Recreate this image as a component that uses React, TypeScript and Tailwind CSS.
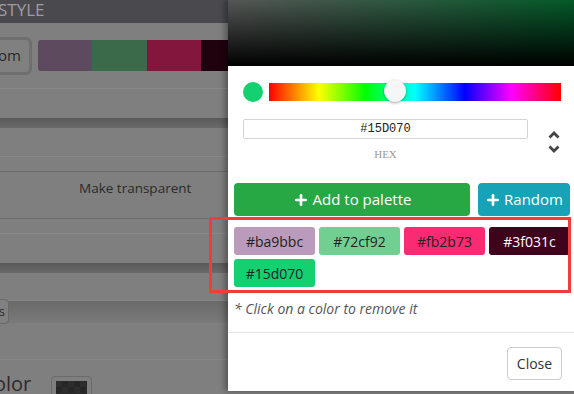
import { Plus } from 'lucide-react';

const palette = [
  { hex: '#ba9bbc', text: 'text-[#222]' },
  { hex: '#72cf92', text: 'text-[#222]' },
  { hex: '#fb2b73', text: 'text-[#222]' },
  { hex: '#3f031c', text: 'text-white' },
  { hex: '#15d070', text: 'text-[#222]' },
];

function Chevron({ up }: { up?: boolean }) {
  return (
    <svg width="12" height="8" viewBox="0 0 12 8" className="block">
      <path
        d={up ? 'M1.5 6.5 L6 2 L10.5 6.5' : 'M1.5 1.5 L6 6 L10.5 1.5'}
        fill="none"
        stroke="#444"
        strokeWidth="2.8"
      />
    </svg>
  );
}

export default function App() {
  return (
    <div className="relative w-[574px] h-[394px] overflow-hidden bg-[#7f7f7f] font-['Open_Sans','Noto_Sans',sans-serif]">
      {/* Page behind the dialog (dimmed) */}
      <div className="flex flex-col">
        <div className="h-[23px] bg-[#4a494e] text-[#9d9ca2] text-[17px] leading-[20px] -ml-[2px]">STYLE</div>
        <div className="h-[66px] border-b border-[#898989] flex items-center gap-[6px] -ml-[20px]">
          <div className="w-[52px] h-[38px] rounded-[6px] border-[3px] border-[#6f6f6f] bg-[#808080] flex items-center justify-end pr-[8px] text-[15px] text-[#2a2a2a]">
            om
          </div>
          <div className="flex h-[31px] rounded-[3px] overflow-hidden">
            <div className="w-[54px] bg-[#5d4a5e]" />
            <div className="w-[55px] bg-[#3a6a4a]" />
            <div className="w-[54px] bg-[#82163c]" />
            <div className="w-[30px] bg-[#20010e]" />
          </div>
        </div>
        <div className="h-[29px]" />
        <div className="h-[10px] bg-gradient-to-b from-[#595959] to-[#6a6a6a]" />
        <div className="h-[29px] border-b border-[#888]" />
        <div className="h-[15px] border-b border-[#6c6c6c]" />
        <div className="h-[32px] flex items-center pl-[79px] text-[13.5px] text-[#2b2b2b]">Make transparent</div>
        <div className="h-[15px] border-b border-[#6c6c6c]" />
        <div className="h-[15px] border-b border-[#888]" />
        <div className="h-[29px]" />
        <div className="h-[10px] bg-gradient-to-b from-[#595959] to-[#6a6a6a]" />
        <div className="h-[28px] border-b border-[#888]" />
        <div className="relative h-[22px] bg-gradient-to-b from-[#6a6a6a] to-[#7a7a7a]">
          <div className="absolute left-[-20px] top-[-2px] w-[29px] h-[25px] rounded-[4px] border border-[#6a6a6a] bg-[#808080] flex items-center justify-end pr-[3px] text-[13px] text-[#2a2a2a]">s</div>
        </div>
        <div className="h-[37px] border-b border-[#888]" />
        <div className="h-[38px] flex items-end gap-[20px] -ml-[6px]">
          <span className="text-[20px] leading-[28px] text-[#2b2b2b]">olor</span>
          <div className="w-[41px] h-[28px] rounded-[4px] border border-[#6a6a6a] p-[4px] mb-[-6px]">
            <div className="w-full h-full bg-[#2d2d2d] bg-[linear-gradient(45deg,#262626_25%,transparent_25%,transparent_75%,#262626_75%),linear-gradient(45deg,#262626_25%,transparent_25%,transparent_75%,#262626_75%)] bg-[length:12px_12px] bg-[position:0_0,6px_6px]" />
          </div>
        </div>
      </div>

      {/* Dialog */}
      <div className="absolute left-[228px] top-0 w-[350px] h-[391px] bg-white shadow-[-3px_0_6px_rgba(0,0,0,0.35)] flex flex-col">
        <div className="h-[66px] bg-[linear-gradient(to_bottom,transparent,#000),linear-gradient(to_right,#565656,#035a28)]" />

        <div className="flex items-center pl-[15px] pr-[13px] pt-[16px] gap-[6px]">
          <div className="w-[20px] h-[20px] rounded-full bg-[#15d070]" />
          <div className="relative w-[292px] h-[18px] bg-[linear-gradient(to_right,#f00_0%,#ff0_17%,#0f0_33%,#0ff_50%,#00f_67%,#f0f_83%,#f00_100%)]">
            <div className="absolute left-[115px] top-[-3px] w-[22px] h-[22px] rounded-full bg-[#f6f6f6] shadow-[0_1px_3px_rgba(0,0,0,0.35)]" />
          </div>
        </div>

        <div className="flex pl-[15px] pt-[17px] gap-[20px]">
          <div className="flex flex-col items-center w-[285px]">
            <div className="w-full h-[20px] border border-[#d4d4d4] rounded-[2px] flex items-center justify-center font-['Liberation_Mono',monospace] text-[12px] text-[#222]">
              #15D070
            </div>
            <div className="mt-[8px] font-['Liberation_Serif',serif] text-[11px] leading-[14px] text-[#999]">HEX</div>
          </div>
          <div className="flex flex-col gap-[6px] pt-[12px]">
            <Chevron up />
            <Chevron />
          </div>
        </div>

        <div className="flex pl-[6px] pt-[22px] gap-[8px]">
          <button className="w-[236px] h-[33px] rounded-[4px] bg-[#28a745] text-white text-[15px] flex items-center justify-center gap-[4px]">
            <Plus size={16} strokeWidth={4} />
            Add to palette
          </button>
          <button className="w-[92px] h-[33px] rounded-[4px] bg-[#17a2b8] text-white text-[15px] flex items-center justify-center gap-[3px]">
            <Plus size={16} strokeWidth={4} />
            Random
          </button>
        </div>

        <div className="flex flex-wrap gap-[4px] pl-[6px] pt-[11px] w-[346px]">
          {palette.map((c) => (
            <div
              key={c.hex}
              className={`w-[81px] h-[28px] rounded-[3px] flex items-center justify-center text-[14px] ${c.text}`}
              style={{ backgroundColor: c.hex }}
            >
              {c.hex}
            </div>
          ))}
        </div>

        <p className="pl-[6px] pt-[11px] text-[14px] italic text-[#555]">* Click on a color to remove it</p>

        <div className="mt-[13px] border-t border-[#e5e5e5] flex justify-end pr-[16px] pt-[14px]">
          <button className="w-[55px] h-[33px] rounded-[4px] border border-[#ccc] text-[14px] text-[#333]">Close</button>
        </div>
      </div>

      {/* Annotation box */}
      <div className="absolute left-[209px] top-[217px] w-[362px] h-[76px] border-[3px] border-[#f23b3b]" />
    </div>
  );
}
